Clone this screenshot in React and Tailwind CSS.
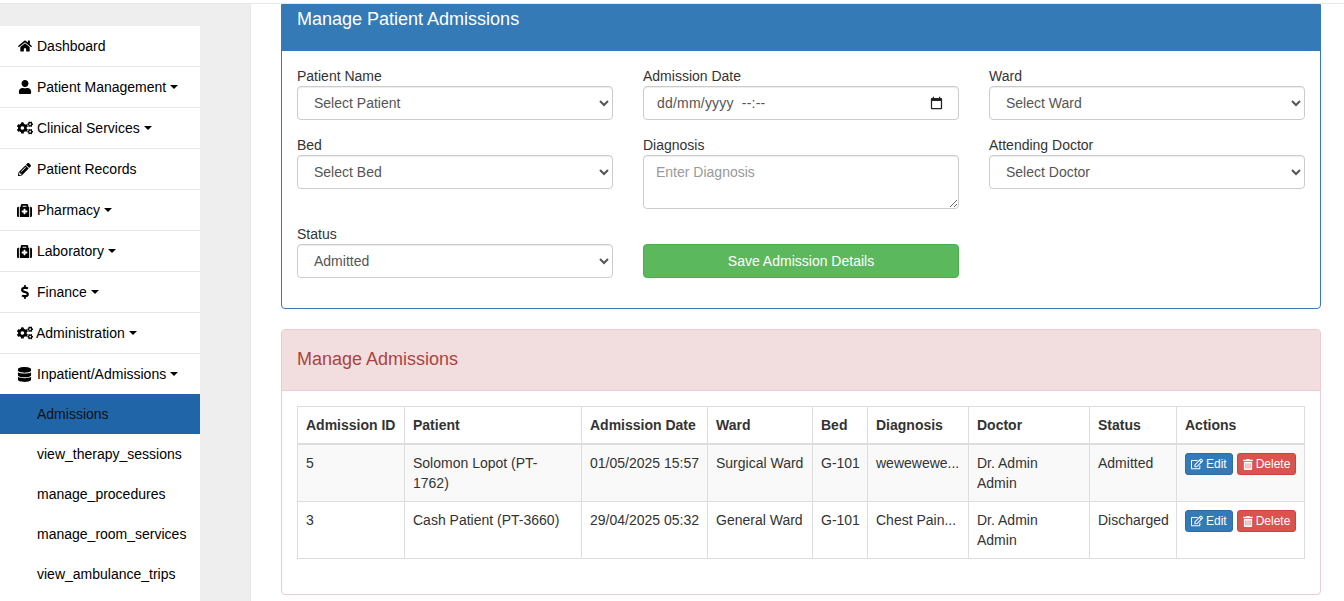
import React from "react";
import { FaHome, FaUser, FaCogs, FaPencilAlt, FaMedkit, FaDollarSign, FaDatabase, FaRegEdit, FaTrashAlt } from "react-icons/fa";

const Caret = () => (
  <span className="inline-block ml-[4px] w-0 h-0 align-middle border-t-[4px] border-x-[4px] border-t-[#000] border-x-transparent" />
);

const menu = [
  { icon: FaHome, label: "Dashboard", size: "w-[14px] h-[14px]" },
  { icon: FaUser, label: "Patient Management", caret: true, size: "w-[14px] h-[14px]" },
  { icon: FaCogs, label: "Clinical Services", caret: true, size: "w-[16px] h-[16px]" },
  { icon: FaPencilAlt, label: "Patient Records", size: "w-[13px] h-[13px]" },
  { icon: FaMedkit, label: "Pharmacy", caret: true, size: "w-[15px] h-[15px]" },
  { icon: FaMedkit, label: "Laboratory", caret: true, size: "w-[15px] h-[15px]" },
  { icon: FaDollarSign, label: "Finance", caret: true, size: "w-[14px] h-[14px]" },
  { icon: FaCogs, label: "Administration", caret: true, tight: true, size: "w-[16px] h-[16px]" },
  { icon: FaDatabase, label: "Inpatient/Admissions", caret: true, last: true, size: "w-[15px] h-[15px]" },
];
const sub = ["Admissions", "view_therapy_sessions", "manage_procedures", "manage_room_services", "view_ambulance_trips"];

function Sidebar() {
  return (
    <aside className="w-[251px] shrink-0 bg-[#eeeeee] border-r border-[#e7e7e7] pt-[22px] flex flex-col">
      <nav className="w-[200px] flex-1 bg-white text-[14px] leading-[20px] text-[#000]">
        {menu.map((m) => {
          const Icon = m.icon;
          return (
            <div key={m.label} className={`flex items-center pl-[17px] ${m.last ? "h-[40px]" : "h-[41px] border-b border-[#e7e7e7]"}`}>
              <span className="w-[15px] flex justify-center"><Icon className={`shrink-0 ${m.size}`} /></span>
              <span className={m.tight ? "ml-[4px]" : "ml-[5px]"}>{m.label}</span>
              {m.caret && <Caret />}
            </div>
          );
        })}
        {sub.map((s, i) => (
          <div key={s} className={`h-[40px] flex items-center pl-[37px] ${i === 0 ? "bg-[#2065a8] text-[#111]" : ""}`}>{s}</div>
        ))}
      </nav>
    </aside>
  );
}

const control = "block w-full h-[34px] bg-white border border-[#cccccc] rounded-[4px] px-[12px] text-[14px] text-[#555555] shadow-[inset_0_1px_1px_rgba(0,0,0,0.075)]";

function Field({ label, children }) {
  return (
    <div className="mb-[15px]">
      <label className="block text-[14px] leading-[20px] text-[#333333]">{label}</label>
      {children}
    </div>
  );
}

function Select({ value }) {
  return (
    <select className={control} defaultValue={value}>
      <option>{value}</option>
    </select>
  );
}

function AdmissionForm() {
  return (
    <section className="border border-[#337ab7] rounded-b-[4px] bg-white h-[305px]">
      <div className="h-[46px] bg-[#337ab7] px-[15px]">
        <h3 className="text-[18px] leading-[29px] text-white">Manage Patient Admissions</h3>
      </div>
      <div className="px-[15px] pt-[15px] grid grid-cols-3 gap-x-[30px]">
        <Field label="Patient Name"><Select value="Select Patient" /></Field>
        <Field label="Admission Date">
          <div className={`${control} flex items-center justify-between pr-[14px]`}>
            <span className="pl-[1px] text-[#555555] tracking-[0.2px]">dd/mm/yyyy&nbsp; --:--</span>
            <svg viewBox="0 0 24 24" className="w-[15px] h-[15px]" fill="#222">
              <path d="M19 3h-1V1h-2v2H8V1H6v2H5C3.9 3 3 3.9 3 5v14c0 1.1.9 2 2 2h14c1.1 0 2-.9 2-2V5c0-1.1-.9-2-2-2zm0 16H5V8h14v11z" />
            </svg>
          </div>
        </Field>
        <Field label="Ward"><Select value="Select Ward" /></Field>
        <Field label="Bed"><Select value="Select Bed" /></Field>
        <Field label="Diagnosis">
          <textarea placeholder="Enter Diagnosis" className={`${control} !h-[54px] py-[6px] leading-[20px] placeholder:text-[#999999]`} />
        </Field>
        <Field label="Attending Doctor"><Select value="Select Doctor" /></Field>
        <Field label="Status"><Select value="Admitted" /></Field>
        <div className="pt-[20px]">
          <button className="block w-full h-[34px] bg-[#5cb85c] border border-[#4cae4c] rounded-[4px] text-white text-[14px]">Save Admission Details</button>
        </div>
      </div>
    </section>
  );
}

const rows = [
  ["5", <>Solomon Lopot (PT-<br />1762)</>, "01/05/2025 15:57", "Surgical Ward", "G-101", "wewewewe...", <>Dr. Admin<br />Admin</>, "Admitted"],
  ["3", "Cash Patient (PT-3660)", "29/04/2025 05:32", "General Ward", "G-101", "Chest Pain...", <>Dr. Admin<br />Admin</>, "Discharged"],
];
const heads = ["Admission ID", "Patient", "Admission Date", "Ward", "Bed", "Diagnosis", "Doctor", "Status", "Actions"];
const widths = [107, 177, 126, 105, 55, 101, 121, 87, 128];

function ActionButton({ className, icon: Icon, iconSize, children }) {
  return (
    <button className={`inline-flex items-center h-[22px] px-[5px] rounded-[3px] border text-white text-[12px] leading-[18px] ${className}`}>
      <Icon className={`mr-[3px] ${iconSize}`} />
      {children}
    </button>
  );
}

function AdmissionsTable() {
  return (
    <section className="mt-[20px] border border-[#ebccd1] rounded-[4px] bg-white h-[266px]">
      <div className="h-[61px] bg-[#f2dede] border-b border-[#ebccd1] rounded-t-[3px] px-[15px] pb-[2px] flex items-center">
        <h3 className="text-[18px] text-[#a94442]">Manage Admissions</h3>
      </div>
      <div className="p-[15px]">
        <table className="w-full table-fixed border-collapse text-[14px] leading-[20px] text-[#333333]">
          <colgroup>
            {widths.map((w, i) => <col key={i} width={w} />)}
          </colgroup>
          <thead>
            <tr>
              {heads.map((h) => (
                <th key={h} className="border border-[#dddddd] border-b-2 p-[8px] text-left font-bold whitespace-nowrap h-[37px]">{h}</th>
              ))}
            </tr>
          </thead>
          <tbody>
            {rows.map((r, i) => (
              <tr key={r[0]} className={i === 0 ? "bg-[#f9f9f9]" : ""}>
                {r.map((c, j) => (
                  <td key={j} className="border border-[#dddddd] p-[8px] align-top h-[57px] whitespace-nowrap">{c}</td>
                ))}
                <td className="border border-[#dddddd] p-[8px] align-top whitespace-nowrap">
                  <div className="flex gap-[4px]">
                    <ActionButton className="bg-[#337ab7] border-[#2e6da4]" icon={FaRegEdit} iconSize="w-[12px] h-[12px]">Edit</ActionButton>
                    <ActionButton className="bg-[#d9534f] border-[#d43f3a]" icon={FaTrashAlt} iconSize="w-[10px] h-[11px]">Delete</ActionButton>
                  </div>
                </td>
              </tr>
            ))}
          </tbody>
        </table>
      </div>
    </section>
  );
}

export default function App() {
  return (
    <div className="h-[601px] overflow-hidden bg-white font-['Liberation_Sans',Arial,sans-serif]">
      <div className="h-[4px] border-b border-[#e7e7e7] bg-white" />
      <div className="flex h-[597px]">
        <Sidebar />
        <main className="flex-1 min-w-0 pl-[30px] pr-[23px]">
          <AdmissionForm />
          <AdmissionsTable />
        </main>
      </div>
    </div>
  );
}
